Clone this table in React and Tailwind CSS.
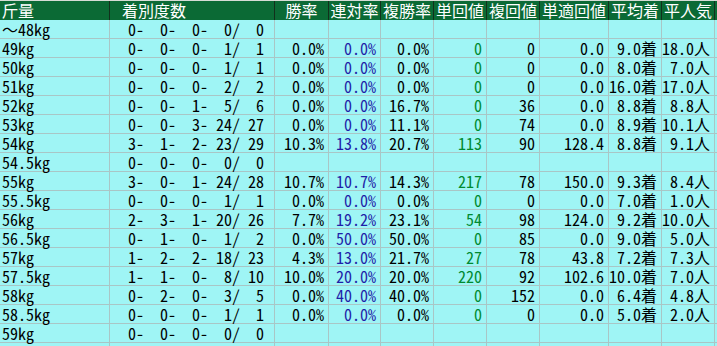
import React from 'react'

const FONT = { fontFamily: '"Noto Sans Mono CJK JP", "Noto Sans CJK JP", "Liberation Mono", monospace' }

const cols = [
  { label: '斤量', w: 'w-[110px]', head: 'justify-start pl-[2px]' },
  { label: '着別度数', w: 'w-[165px]', head: 'justify-start pl-[12px]' },
  { label: '勝率', w: 'w-[54px]', head: 'justify-center' },
  { label: '連対率', w: 'w-[52px]', head: 'justify-center' },
  { label: '複勝率', w: 'w-[53px]', head: 'justify-center' },
  { label: '単回値', w: 'w-[53px]', head: 'justify-center' },
  { label: '複回値', w: 'w-[53px]', head: 'justify-center' },
  { label: '単適回値', w: 'w-[69px]', head: 'justify-center' },
  { label: '平均着', w: 'w-[53px]', head: 'justify-center' },
  { label: '平人気', w: 'w-[53px]', head: 'justify-center' },
]

// weight, [1着,2着,3着,着外,計], 勝率, 連対率, 複勝率, 単回値, 複回値, 単適回値, 平均着, 平人気
const rows = [
  ['〜48kg', [0, 0, 0, 0, 0]],
  ['49kg', [0, 0, 0, 1, 1], '0.0%', '0.0%', '0.0%', '0', '0', '0.0', '9.0着', '18.0人'],
  ['50kg', [0, 0, 0, 1, 1], '0.0%', '0.0%', '0.0%', '0', '0', '0.0', '8.0着', '7.0人'],
  ['51kg', [0, 0, 0, 2, 2], '0.0%', '0.0%', '0.0%', '0', '0', '0.0', '16.0着', '17.0人'],
  ['52kg', [0, 0, 1, 5, 6], '0.0%', '0.0%', '16.7%', '0', '36', '0.0', '8.8着', '8.8人'],
  ['53kg', [0, 0, 3, 24, 27], '0.0%', '0.0%', '11.1%', '0', '74', '0.0', '8.9着', '10.1人'],
  ['54kg', [3, 1, 2, 23, 29], '10.3%', '13.8%', '20.7%', '113', '90', '128.4', '8.8着', '9.1人'],
  ['54.5kg', [0, 0, 0, 0, 0]],
  ['55kg', [3, 0, 1, 24, 28], '10.7%', '10.7%', '14.3%', '217', '78', '150.0', '9.3着', '8.4人'],
  ['55.5kg', [0, 0, 0, 1, 1], '0.0%', '0.0%', '0.0%', '0', '0', '0.0', '7.0着', '1.0人'],
  ['56kg', [2, 3, 1, 20, 26], '7.7%', '19.2%', '23.1%', '54', '98', '124.0', '9.2着', '10.0人'],
  ['56.5kg', [0, 1, 0, 1, 2], '0.0%', '50.0%', '50.0%', '0', '85', '0.0', '9.0着', '5.0人'],
  ['57kg', [1, 2, 2, 18, 23], '4.3%', '13.0%', '21.7%', '27', '78', '43.8', '7.2着', '7.3人'],
  ['57.5kg', [1, 1, 0, 8, 10], '10.0%', '20.0%', '20.0%', '220', '92', '102.6', '10.0着', '7.0人'],
  ['58kg', [0, 2, 0, 3, 5], '0.0%', '40.0%', '40.0%', '0', '152', '0.0', '6.4着', '4.8人'],
  ['58.5kg', [0, 0, 0, 1, 1], '0.0%', '0.0%', '0.0%', '0', '0', '0.0', '5.0着', '2.0人'],
  ['59kg', [0, 0, 0, 0, 0]],
]

const pad = (n) => String(n).padStart(3, ' ')
const record = ([a, b, c, d, e]) => `${pad(a)}-${pad(b)}-${pad(c)}-${pad(d)}/${pad(e)}`

const valueColor = (i) => {
  if (i === 1) return 'text-[#1f1fa8]'
  if (i === 3) return 'text-[#008a30]'
  return 'text-black'
}

const Row = ({ row }) => {
  const [weight, rec, ...vals] = row
  return (
    <div className="flex h-[19px] border-b border-[#a9c6c6] bg-[#9ff5f5] leading-[18px]">
      <div className={`${cols[0].w} border-r border-[#a9c6c6] pl-[2px] text-black`}>{weight}</div>
      <div className={`${cols[1].w} border-r border-[#a9c6c6] whitespace-pre pl-[2px] text-black`}>{record(rec)}</div>
      {cols.slice(2).map((c, i) => (
        <div key={c.label} className={`${c.w} border-r border-[#a9c6c6] whitespace-pre pr-[4px] text-right ${valueColor(i)}`}>
          {vals[i] || ''}
        </div>
      ))}
    </div>
  )
}

export default function App() {
  return (
    <div className="h-[346px] w-[717px] overflow-hidden bg-[#9ff5f5] text-[16px]" style={FONT}>
      {/* header */}
      <div className="flex h-[20px] border-t border-[#d6dcd6] bg-[#0b6a35] leading-[19px] text-white">
        {cols.map((c) => (
          <div key={c.label} className={`${c.w} flex border-r border-[#12301c] ${c.head}`}>
            {c.label}
          </div>
        ))}
      </div>
      {rows.map((r) => (
        <Row key={r[0]} row={r} />
      ))}
      <div className="flex h-[19px] bg-[#9ff5f5]">
        {cols.map((c) => (
          <div key={c.label} className={`${c.w} border-r border-[#a9c6c6]`} />
        ))}
      </div>
    </div>
  )
}
